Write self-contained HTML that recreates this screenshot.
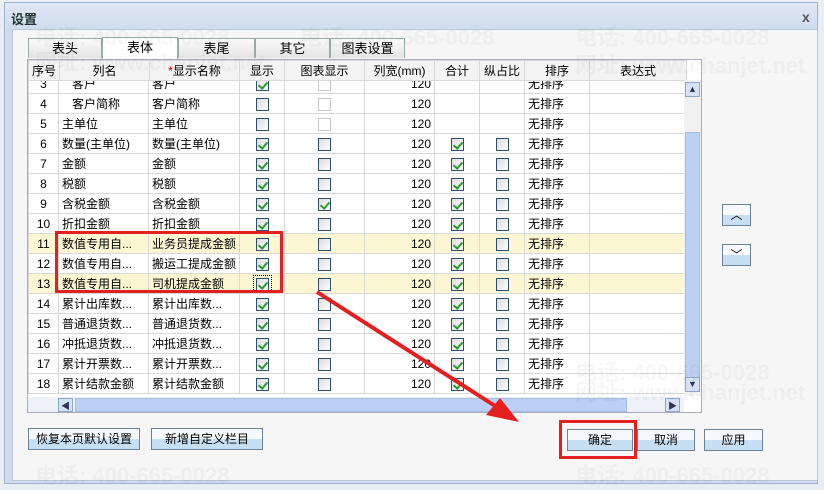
<!DOCTYPE html>
<html><head><meta charset="utf-8"><style>
*{margin:0;padding:0;box-sizing:border-box}
body{width:824px;height:486px;background:#e9eef5;font-family:"Liberation Sans","Noto Sans CJK SC",sans-serif;font-size:12px;color:#000;position:relative;overflow:hidden}
.dlg{position:absolute;left:4px;top:2px;width:814px;height:482px;border:1px solid #9fb3cc;background:linear-gradient(#dfe8f3,#cfdcec 28px,#cfdcec);}
.title{position:absolute;left:6px;top:6px;font-weight:bold;font-size:13px;color:#233;}
.x{position:absolute;left:797px;top:6px;font-weight:bold;font-size:14px;color:#555}
.body{position:absolute;left:7px;top:26px;width:806px;height:452px;background:#f6f6f6;border:1px solid #b9c6d6}
.tab{position:absolute;top:38px;height:20px;border:1px solid #9aa;border-bottom:none;background:linear-gradient(#fafafa,#e4e4e4);text-align:center;line-height:19px;font-size:13px}
.tab.act{background:#fff;top:37px;height:22px}
.grid{position:absolute;left:27px;top:59px;width:675px;height:354px;border:1px solid #aab;background:#fff;overflow:hidden}
table{border-collapse:collapse;table-layout:fixed;position:absolute;left:0;top:0}
td,th{border:1px solid #d8d8d8;height:20px;padding:0 3px;white-space:nowrap;overflow:hidden;font-weight:normal;font-size:12px}
th{background:#f3f3f3;height:20px;font-size:12px}
.c{text-align:center}.r{text-align:right}
.y td{background:#fdf6d3}
.cb{display:inline-block;width:13px;height:13px;border:1px solid #2e4e6e;background:linear-gradient(135deg,#dcdcdc,#fff);vertical-align:middle;position:relative}
.cb.d{border-color:#c8c8c8;background:#fff}
.cb.k::after{content:"";position:absolute;left:3px;top:1px;width:4px;height:7px;border:solid #2a9a2a;border-width:0 2px 2px 0;transform:rotate(40deg)}
.vs{position:absolute;left:656px;top:20px;width:17px;height:316px;background:#f1f1f1}
.hs{position:absolute;left:0;top:337px;width:656px;height:16px;background:#eef2f8}
.btn{position:absolute;height:22px;border:1px solid #6e8196;background:linear-gradient(#f6f9fd 50%,#c6dff3 50%);text-align:center;line-height:20px;font-size:12px}
.wm{position:absolute;color:rgba(0,0,0,0.03);font-size:22px;font-weight:bold;white-space:nowrap}
.red{position:absolute;border:3px solid #e41f1f}
</style></head><body>
<div class="dlg">
<div class="title">设置</div><div class="x">x</div>
<div class="body"></div>
</div>
<div class="tab" style="left:28px;width:74px">表头</div>
<div class="tab act" style="left:102px;width:76px">表体</div>
<div class="tab" style="left:178px;width:77px">表尾</div>
<div class="tab" style="left:255px;width:75px">其它</div>
<div class="tab" style="left:330px;width:75px">图表设置</div>
<div class="grid">
<table style="top:13px">
<colgroup><col style="width:30px"><col style="width:90px"><col style="width:90px"><col style="width:45px"><col style="width:80px"><col style="width:70px"><col style="width:45px"><col style="width:45px"><col style="width:65px"><col style="width:97px"></colgroup>
<tr><td class="c">3</td><td>&nbsp;&nbsp;&nbsp;客户</td><td>客户</td><td class="c"><span class="cb k"></span></td><td class="c"><span class="cb d"></span></td><td class="r">120</td><td></td><td></td><td>无排序</td><td></td></tr>
<tr><td class="c">4</td><td>&nbsp;&nbsp;&nbsp;客户简称</td><td>客户简称</td><td class="c"><span class="cb"></span></td><td class="c"><span class="cb d"></span></td><td class="r">120</td><td></td><td></td><td>无排序</td><td></td></tr>
<tr><td class="c">5</td><td>主单位</td><td>主单位</td><td class="c"><span class="cb"></span></td><td class="c"><span class="cb d"></span></td><td class="r">120</td><td></td><td></td><td>无排序</td><td></td></tr>
<tr><td class="c">6</td><td>数量(主单位)</td><td>数量(主单位)</td><td class="c"><span class="cb k"></span></td><td class="c"><span class="cb"></span></td><td class="r">120</td><td class="c"><span class="cb k"></span></td><td class="c"><span class="cb"></span></td><td>无排序</td><td></td></tr>
<tr><td class="c">7</td><td>金额</td><td>金额</td><td class="c"><span class="cb k"></span></td><td class="c"><span class="cb"></span></td><td class="r">120</td><td class="c"><span class="cb k"></span></td><td class="c"><span class="cb"></span></td><td>无排序</td><td></td></tr>
<tr><td class="c">8</td><td>税额</td><td>税额</td><td class="c"><span class="cb k"></span></td><td class="c"><span class="cb"></span></td><td class="r">120</td><td class="c"><span class="cb k"></span></td><td class="c"><span class="cb"></span></td><td>无排序</td><td></td></tr>
<tr><td class="c">9</td><td>含税金额</td><td>含税金额</td><td class="c"><span class="cb k"></span></td><td class="c"><span class="cb k"></span></td><td class="r">120</td><td class="c"><span class="cb k"></span></td><td class="c"><span class="cb"></span></td><td>无排序</td><td></td></tr>
<tr><td class="c">10</td><td>折扣金额</td><td>折扣金额</td><td class="c"><span class="cb k"></span></td><td class="c"><span class="cb"></span></td><td class="r">120</td><td class="c"><span class="cb k"></span></td><td class="c"><span class="cb"></span></td><td>无排序</td><td></td></tr>
<tr class="y"><td class="c">11</td><td>数值专用自...</td><td>业务员提成金额</td><td class="c"><span class="cb k"></span></td><td class="c"><span class="cb"></span></td><td class="r">120</td><td class="c"><span class="cb k"></span></td><td class="c"><span class="cb"></span></td><td>无排序</td><td></td></tr>
<tr><td class="c">12</td><td>数值专用自...</td><td>搬运工提成金额</td><td class="c"><span class="cb k"></span></td><td class="c"><span class="cb"></span></td><td class="r">120</td><td class="c"><span class="cb k"></span></td><td class="c"><span class="cb"></span></td><td>无排序</td><td></td></tr>
<tr class="y"><td class="c">13</td><td>数值专用自...</td><td>司机提成金额</td><td class="c"><span class="cb k" style="outline:1px dotted #000;outline-offset:2px"></span></td><td class="c"><span class="cb"></span></td><td class="r">120</td><td class="c"><span class="cb k"></span></td><td class="c"><span class="cb"></span></td><td>无排序</td><td></td></tr>
<tr><td class="c">14</td><td>累计出库数...</td><td>累计出库数...</td><td class="c"><span class="cb k"></span></td><td class="c"><span class="cb"></span></td><td class="r">120</td><td class="c"><span class="cb k"></span></td><td class="c"><span class="cb"></span></td><td>无排序</td><td></td></tr>
<tr><td class="c">15</td><td>普通退货数...</td><td>普通退货数...</td><td class="c"><span class="cb k"></span></td><td class="c"><span class="cb"></span></td><td class="r">120</td><td class="c"><span class="cb k"></span></td><td class="c"><span class="cb"></span></td><td>无排序</td><td></td></tr>
<tr><td class="c">16</td><td>冲抵退货数...</td><td>冲抵退货数...</td><td class="c"><span class="cb k"></span></td><td class="c"><span class="cb"></span></td><td class="r">120</td><td class="c"><span class="cb k"></span></td><td class="c"><span class="cb"></span></td><td>无排序</td><td></td></tr>
<tr><td class="c">17</td><td>累计开票数...</td><td>累计开票数...</td><td class="c"><span class="cb k"></span></td><td class="c"><span class="cb"></span></td><td class="r">120</td><td class="c"><span class="cb k"></span></td><td class="c"><span class="cb"></span></td><td>无排序</td><td></td></tr>
<tr><td class="c">18</td><td>累计结款金额</td><td>累计结款金额</td><td class="c"><span class="cb k"></span></td><td class="c"><span class="cb"></span></td><td class="r">120</td><td class="c"><span class="cb k"></span></td><td class="c"><span class="cb"></span></td><td>无排序</td><td></td></tr>
</table>
<table style="background:#f3f3f3">
<colgroup><col style="width:30px"><col style="width:90px"><col style="width:90px"><col style="width:45px"><col style="width:80px"><col style="width:70px"><col style="width:45px"><col style="width:45px"><col style="width:65px"><col style="width:97px"></colgroup>
<tr><th>序号</th><th>列名</th><th><span style="color:#d00">*</span>显示名称</th><th>显示</th><th>图表显示</th><th>列宽(mm)</th><th>合计</th><th>纵占比</th><th>排序</th><th>表达式</th></tr>
</table>
<div class="vs"><div style="position:absolute;left:1px;top:2px;width:15px;height:15px;border:1px solid #8fa6c8;background:#d6e3f7;font-size:9px;text-align:center;line-height:13px;color:#335">▲</div><div style="position:absolute;left:1px;top:52px;width:15px;height:260px;background:#bcd0f5;border:1px solid #a5bde6"></div><div style="position:absolute;left:1px;top:297px;width:15px;height:15px;border:1px solid #8fa6c8;background:#d6e3f7;font-size:9px;text-align:center;line-height:13px;color:#335">▼</div></div>
<div class="hs"><div style="position:absolute;left:30px;top:1px;width:15px;height:14px;border:1px solid #8fa6c8;background:#d6e3f7;font-size:9px;text-align:center;color:#335">◀</div><div style="position:absolute;left:47px;top:1px;width:552px;height:14px;background:#bcd0f5;border:1px solid #a5bde6"></div><div style="position:absolute;left:637px;top:1px;width:15px;height:14px;border:1px solid #8fa6c8;background:#d6e3f7;font-size:9px;text-align:center;color:#335">▶</div></div>
</div>
<div class="btn" style="left:722px;top:204px;width:29px">︿</div>
<div class="btn" style="left:722px;top:244px;width:29px">﹀</div>
<div class="btn" style="left:28px;top:428px;width:112px">恢复本页默认设置</div>
<div class="btn" style="left:151px;top:428px;width:112px">新增自定义栏目</div>
<div class="btn" style="left:567px;top:429px;width:66px">确定</div>
<div class="btn" style="left:637px;top:429px;width:58px">取消</div>
<div class="btn" style="left:704px;top:429px;width:59px">应用</div>
<div class="wm" style="left:35px;top:20px">电话: 400-665-0028</div>
<div class="wm" style="left:300px;top:20px">电话: 400-665-0028</div>
<div class="wm" style="left:575px;top:20px">电话: 400-665-0028</div>
<div class="wm" style="left:35px;top:45px">网址: www.chanjet.net</div>
<div class="wm" style="left:575px;top:48px">网址: www.chanjet.net</div>
<div class="wm" style="left:575px;top:355px">电话: 400-665-0028</div>
<div class="wm" style="left:575px;top:375px">网址: www.chanjet.net</div>
<div class="wm" style="left:575px;top:458px">电话: 400-665-0028</div>
<div class="wm" style="left:35px;top:458px">电话: 400-665-0028</div>
<div class="red" style="left:55px;top:231px;width:228px;height:62px"></div>
<div class="red" style="left:559px;top:420px;width:78px;height:39px"></div>
<svg style="position:absolute;left:0;top:0" width="824" height="486"><line x1="317" y1="292" x2="503" y2="411" stroke="#e41f1f" stroke-width="4"/><polygon points="519,422 486,415 500,398" fill="#e41f1f"/></svg>
</body></html>
